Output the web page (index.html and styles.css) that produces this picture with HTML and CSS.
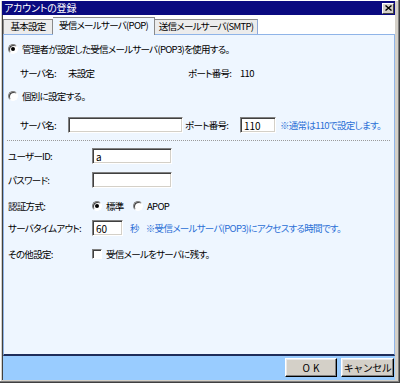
FILE: index.html
```html
<!DOCTYPE html>
<html lang="ja">
<head>
<meta charset="utf-8">
<title>アカウントの登録</title>
<link rel="stylesheet" href="styles.css">
</head>
<body>
<div class="window">
  <div class="titlebar">
    <span class="title">アカウントの登録</span>
    <span class="close"><svg width="7" height="6" viewBox="0 0 7 6"><path d="M0.5 0.5 L6.5 5.5 M6.5 0.5 L0.5 5.5" stroke="#000" stroke-width="1.4" fill="none"/></svg></span>
  </div>
  <div class="client">
    <div class="tabs">
      <div class="tab first">基本設定</div>
      <div class="tab active">受信メールサーバ(POP)</div>
      <div class="tab last">送信メールサーバ(SMTP)</div>
    </div>
    <div class="panel">
      <div class="row r1"><span class="radio checked"></span><span>管理者が設定した受信メールサーバ(POP3)を使用する。</span></div>
      <div class="row r2 indent"><span class="lbl">サーバ名:</span><span class="val">未設定</span><span class="plbl">ポート番号:</span><span>110</span></div>
      <div class="row r3"><span class="radio"></span><span>個別に設定する。</span></div>
      <div class="row r4 indent"><span class="lbl">サーバ名:</span><input class="field server" type="text" value=""><span class="plbl2">ポート番号:</span><input class="field port" type="text" value="110"><span class="note">※通常は110で設定します。</span></div>
      <div class="sep"></div>
      <div class="row r5"><span class="flbl">ユーザーID:</span><input class="field wide" type="text" value="a"></div>
      <div class="row r6"><span class="flbl">パスワード:</span><input class="field wide" type="password" value=""></div>
      <div class="row r7"><span class="flbl">認証方式:</span><span class="radio checked"></span><span class="opt">標準</span><span class="radio"></span><span>APOP</span></div>
      <div class="row r8"><span class="flbl">サーバタイムアウト:</span><input class="field sec" type="text" value="60"><span class="blue unit">秒</span><span class="blue note2">※受信メールサーバ(POP3)にアクセスする時間です。</span></div>
      <div class="row r9"><span class="flbl">その他設定:</span><span class="check"></span><span>受信メールをサーバに残す。</span></div>
    </div>
    <div class="footer">
      <button class="btn ok">OK</button>
      <button class="btn cancel">キャンセル</button>
    </div>
  </div>
</div>
</body>
</html>
```

FILE: styles.css
```css
* { box-sizing: border-box; }

body {
  margin: 0;
  background: #d4d0c8;
  font-family: "Noto Sans CJK JP", "Noto Sans", sans-serif;
  font-size: 9.5px;
  letter-spacing: -0.7px;
  color: #000;
  font-feature-settings: "palt" 1;
}

.window {
  width: 400px;
  height: 383px;
  display: flex;
  flex-direction: column;
  padding: 1px 4px 2px 2px;
  border-right: 1px solid #404040;
  border-bottom: 1px solid #404040;
  box-shadow: inset -1px -1px #808080, inset 1px 1px #ffffff;
}

.titlebar {
  flex: none;
  height: 14px;
  background: #0a0a80;
  color: #fff;
  display: flex;
  align-items: center;
  justify-content: space-between;
  padding: 0 1px 0 2px;
}

.title { font-size: 10px; line-height: 14px; letter-spacing: -0.2px; }

.close {
  width: 12px;
  height: 11px;
  background: #d4d0c8;
  border: 1px solid;
  border-color: #fff #404040 #404040 #fff;
  display: flex;
  align-items: center;
  justify-content: center;
}
.close svg { display: block; }

.client {
  flex: 1;
  display: flex;
  flex-direction: column;
  border-left: 1px solid #404040;
}

.tabs {
  flex: none;
  height: 19px;
  background: #fff;
  display: flex;
  align-items: flex-end;
}

.tab {
  height: 15px;
  line-height: 13px;
  text-align: center;
  background: #ececec;
  border: 1px solid #8a8a8a;
  border-bottom: none;
  white-space: nowrap;
}
.tab.first { width: 50px; }
.tab.active {
  width: 102px;
  height: 18px;
  line-height: 15px;
  margin-bottom: -1px;
  background: #eef6ff;
  position: relative;
  z-index: 1;
  border-left: none;
}
.tab.last { width: 103px; border-left: none; border-right-color: #8fa8d8; }

.panel {
  flex: 1;
  background: #eef6ff;
  border: 1px solid #8fb4e8;
  border-bottom: 2px solid #1e2d5a;
  padding: 6px 4px 0 4px;
}

.row {
  display: flex;
  align-items: center;
  height: 16px;
  line-height: 16px;
  white-space: nowrap;
}
.r2 { margin-top: 8px; }
.r3 { margin-top: 7px; }
.r4 { margin-top: 13px; }
.r5 { margin-top: 7px; }
.r6 { margin-top: 8px; }
.r7 { margin-top: 10px; }
.r8 { margin-top: 6px; }
.r9 { margin-top: 10px; }

.indent { padding-left: 12px; }

.radio {
  flex: none;
  width: 10px;
  height: 10px;
  border-radius: 50%;
  background: #fff;
  border: 1px solid;
  border-color: #808080 #ffffff #ffffff #808080;
  box-shadow: inset 1px 1px #404040;
  margin-right: 4px;
  display: flex;
  align-items: center;
  justify-content: center;
}
.radio.checked::after {
  content: "";
  width: 4px;
  height: 4px;
  border-radius: 50%;
  background: #000;
}

.check {
  flex: none;
  width: 10px;
  height: 10px;
  background: #fff;
  border: 1px solid;
  border-color: #808080 #ffffff #ffffff #808080;
  box-shadow: inset 1px 1px #404040;
  margin-right: 4px;
}

.lbl { width: 48px; }
.val { width: 120px; }
.plbl { width: 52px; }
.plbl2 { width: 55px; margin-left: 2px; }
.flbl { width: 84px; }

.field {
  height: 16px;
  margin: 0;
  padding: 0 3px;
  background: #fff;
  border: 1px solid;
  border-color: #808080 #ffffff #ffffff #808080;
  box-shadow: inset 1px 1px #404040, inset -1px -1px #d4d0c8;
  font-family: "Noto Sans CJK JP", "Noto Sans", sans-serif;
  font-size: 10px;
  color: #000;
  outline: none;
}
.server { width: 115px; }
.port { width: 36px; }
.wide { width: 80px; }
.sec { width: 31px; }

.note { color: #2a6fd6; margin-left: 4px; }
.blue { color: #2a6fd6; }
.unit { margin-left: 7px; }
.note2 { margin-left: 7px; }
.opt { width: 27px; }

.sep {
  margin: 7px 0 0 -1px;
  border-top: 1px dotted #9a9a9a;
}

.footer {
  flex: none;
  height: 24px;
  background: #99ccff;
  display: flex;
  justify-content: flex-end;
  align-items: flex-start;
  gap: 4px;
  padding: 2px 1px 0 0;
}

.btn {
  height: 19px;
  padding: 0;
  background: #d4d0c8;
  border: 1px solid;
  border-color: #ffffff #000000 #000000 #ffffff;
  box-shadow: inset -1px -1px #808080, inset 1px 1px #e8e8e8;
  font-family: "Noto Sans CJK JP", "Noto Sans", sans-serif;
  font-size: 10px;
  letter-spacing: -0.5px;
  color: #000;
}
.btn.ok { width: 52px; letter-spacing: 3px; padding-left: 3px; }
.btn.cancel { width: 53px; }
```
